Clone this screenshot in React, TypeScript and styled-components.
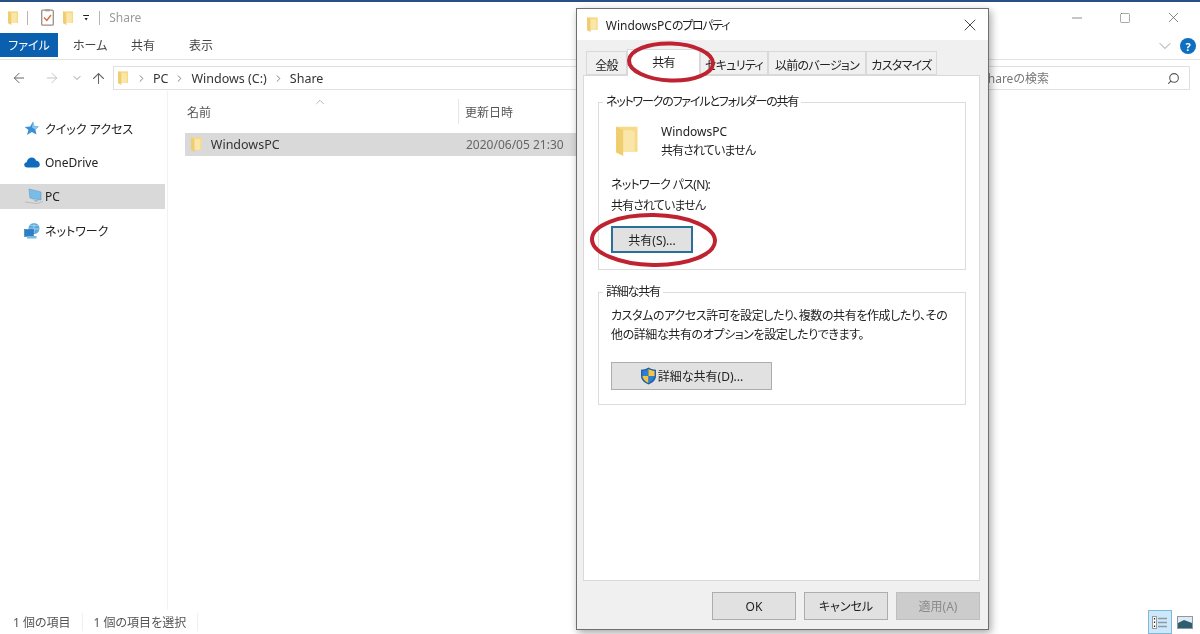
import React from "react";
import styled, { createGlobalStyle } from "styled-components";
import { ArrowLeft, ArrowRight, ArrowUp, ChevronDown, ChevronRight, ChevronUp, Minus, Search, Square, X } from "lucide-react";

const GlobalStyle = createGlobalStyle`
  html, body {
    margin: 0;
    padding: 0;
    background: #fff;
  }
  * {
    box-sizing: border-box;
  }
  body {
    font-family: "Noto Sans", "Noto Sans CJK JP", sans-serif;
    font-feature-settings: "palt";
    font-size: 12px;
    color: #1e1e1e;
  }
`;

function FolderIcon({ size = 14 }: { size?: number }) {
  return (
    <svg width={size * 0.72} height={size} viewBox="0 0 15 21">
      <path d="M0 0.5 H15 V18 H0 Z" fill="#f6da88" />
      <path d="M0 0.5 L5 3 V21 L0 18.5 Z" fill="#f0cd6e" />
      <path d="M5 3 L11 3 L13 4 V18 H5 Z" fill="#fae6a8" />
    </svg>
  );
}

function Shield() {
  return (
    <svg width="17" height="18" viewBox="0 0 17 18">
      <path d="M8.5 0.5 C6 2 3.5 2.6 1 2.8 V9 C1 13 4.5 16 8.5 17.5 C12.5 16 16 13 16 9 V2.8 C13.5 2.6 11 2 8.5 0.5 Z" fill="#1f5fa8" />
      <path d="M8.5 2 V9 H2.4 V4 C4.6 3.8 6.6 3.2 8.5 2 Z" fill="#2f7fd0" />
      <path d="M8.5 2 C10.4 3.2 12.4 3.8 14.6 4 V9 H8.5 Z" fill="#f5c443" />
      <path d="M2.4 9 H8.5 V16 C5.4 14.8 2.8 12.4 2.4 9 Z" fill="#f5c443" />
      <path d="M8.5 9 H14.6 C14.2 12.4 11.6 14.8 8.5 16 Z" fill="#2f7fd0" />
    </svg>
  );
}

function ChecklistIcon() {
  return (
    <svg width="13" height="17" viewBox="0 0 13 17">
      <rect x="0.7" y="1.2" width="11.6" height="15" rx="1" fill="#fff" stroke="#9a9088" strokeWidth="1.3" />
      <rect x="4" y="0.3" width="5" height="2" fill="#a89a8c" />
      <path d="M3 8.5 L5.8 11.5 L10 6" fill="none" stroke="#d8673a" strokeWidth="1.3" />
    </svg>
  );
}

function StarIcon() {
  return (
    <svg width="15" height="15" viewBox="0 0 15 15">
      <path d="M9 0.5 L10.4 5 L14.8 5.4 L11.4 8.4 L12.4 13.5 L7.8 10.9 L3 14 L4.4 9 L0.8 6 L6.2 5.4 Z" fill="#3a8fd8" />
      <path d="M9 0.5 L10.4 5 L14.8 5.4 L11.4 8.4 L8 6.5 Z" fill="#8cc6f0" />
    </svg>
  );
}

function CloudIcon() {
  return (
    <svg width="16" height="11" viewBox="0 0 16 11">
      <path d="M3.4 10.5 C1.4 10.5 0.2 9.2 0.2 7.8 C0.2 6.4 1.2 5.4 2.6 5.2 C3.2 2.4 5.4 0.6 7.8 0.6 C9.8 0.6 11.4 1.8 12 3.4 C14.2 3.6 15.8 5.2 15.8 7.4 C15.8 9.2 14.6 10.5 12.8 10.5 Z" fill="#0f6cbd" />
    </svg>
  );
}

function PcIcon() {
  return (
    <svg width="20" height="17" viewBox="0 0 20 17">
      <path d="M5 1 L17 4 V12 L6 10 Z" fill="#79bde6" stroke="#5c9cc8" strokeWidth="0.6" />
      <path d="M1 14 L13 15.5 L19 13.5" fill="none" stroke="#bcbcbc" strokeWidth="1" />
      <path d="M8 11 L15 12.5 L12 14 Z" fill="#9fb8c8" />
    </svg>
  );
}

function NetworkIcon() {
  return (
    <svg width="16" height="16" viewBox="0 0 16 16">
      <circle cx="10" cy="5.5" r="5.5" fill="#5fa8de" />
      <path d="M6 2 C8 3 12 3 14 2 M5 6 H15 M10 0 V10" stroke="#b8dcf4" strokeWidth="0.7" fill="none" />
      <rect x="0.5" y="6.5" width="9" height="7" fill="#2b7fc4" stroke="#1e6aa8" strokeWidth="0.5" />
      <rect x="3" y="13" width="9.5" height="2.5" fill="#7db8e2" />
    </svg>
  );
}

function DetailsViewIcon() {
  return (
    <svg width="16" height="13" viewBox="0 0 16 13">
      <rect x="0.5" y="0.5" width="4" height="12" fill="#fff" stroke="#9a9a9a" />
      <path d="M2.5 2 V3.5 M2.5 5.5 V7 M2.5 9.5 V11" stroke="#222" strokeWidth="1.2" />
      <path d="M6 2.5 H15 M6 6.5 H15 M6 10.5 H15" stroke="#8a9aa8" strokeWidth="1.3" />
    </svg>
  );
}

function PreviewViewIcon() {
  return (
    <svg width="16" height="13" viewBox="0 0 16 13">
      <rect x="0.5" y="0.5" width="15" height="12" fill="#dfeaf2" stroke="#8c9aa6" />
      <path d="M1 7 L7 4 L15 7 V12 H1 Z" fill="#2f5f6f" />
    </svg>
  );
}

export default function App() {
  return (
    <Screen>
      <GlobalStyle />
      <TopEdge />
      <TitleBar>
        <FolderIcon size={14} />
        <TitleSep />
        <ChecklistIcon />
        <FolderIcon size={14} />
        <Dropdown>
          <i />
        </Dropdown>
        <TitleSep />
        <TitleText>Share</TitleText>
        <WindowButtons>
          <Minus size={16} strokeWidth={1} />
          <Square size={12} strokeWidth={1} />
          <X size={17} strokeWidth={1} />
        </WindowButtons>
      </TitleBar>
      <Ribbon>
        <FileTab>ファイル</FileTab>
        <RibbonTab>ホーム</RibbonTab>
        <RibbonTab>共有</RibbonTab>
        <RibbonTab>表示</RibbonTab>
        <RibbonRight>
          <ChevronDown size={20} strokeWidth={1} color="#888" />
          <HelpBadge>?</HelpBadge>
        </RibbonRight>
      </Ribbon>
      <AddressRow>
        <NavArrows>
          <ArrowLeft size={16} strokeWidth={1.5} color="#666" />
          <ArrowRight size={16} strokeWidth={1.3} color="#bbb" />
          <ChevronDown size={12} strokeWidth={1.5} color="#777" />
          <ArrowUp size={17} strokeWidth={1.5} color="#666" />
        </NavArrows>
        <AddressBar>
          <FolderIcon size={14} />
          <ChevronRight size={11} color="#777" />
          <span>PC</span>
          <ChevronRight size={11} color="#777" />
          <span>Windows (C:)</span>
          <ChevronRight size={11} color="#777" />
          <span>Share</span>
        </AddressBar>
        <SearchBox>
          <span>Shareの検索</span>
          <Search size={13} strokeWidth={2} color="#555" style={{ transform: "scaleX(-1)" }} />
        </SearchBox>
      </AddressRow>
      <Body>
        <NavPane>
          <NavItem>
            <NavIcon><StarIcon /></NavIcon>クイック アクセス
          </NavItem>
          <NavItem>
            <NavIcon><CloudIcon /></NavIcon>OneDrive
          </NavItem>
          <NavItem $selected>
            <NavIcon><PcIcon /></NavIcon>PC
          </NavItem>
          <NavItem>
            <NavIcon><NetworkIcon /></NavIcon>ネットワーク
          </NavItem>
        </NavPane>
        <Content>
          <ColumnHeader>
            <NameColumn>
              名前
              <SortMark><ChevronUp size={14} strokeWidth={1} color="#888" /></SortMark>
            </NameColumn>
            <DateColumn>更新日時</DateColumn>
          </ColumnHeader>
          <FileRow>
            <FileName>
              <FolderIcon size={15} />
              WindowsPC
            </FileName>
            <FileDate>2020/06/05 21:30</FileDate>
          </FileRow>
        </Content>
      </Body>
      <StatusBar>
        <StatusText>1 個の項目</StatusText>
        <StatusText>1 個の項目を選択</StatusText>
        <ViewButtons>
          <ViewButton $active><DetailsViewIcon /></ViewButton>
          <ViewButton><PreviewViewIcon /></ViewButton>
        </ViewButtons>
      </StatusBar>

      <Dialog>
        <DialogTitle>
          <FolderIcon size={15} />
          <span>
            WindowsPC<Tight $spacing={-1.3}>のプロパティ</Tight>
          </span>
          <DialogClose><X size={20} strokeWidth={1} color="#222" /></DialogClose>
        </DialogTitle>
        <DialogBody>
          <TabStrip>
            <Tab $width={41}>全般</Tab>
            <Tab $width={73} $active>共有</Tab>
            <Tab $width={68}>セキュリティ</Tab>
            <Tab $width={98}>以前のバージョン</Tab>
            <Tab $width={71}>カスタマイズ</Tab>
          </TabStrip>
          <Panel>
            <Group $height={176}>
              <legend>ネットワークのファイルとフォルダーの共有</legend>
              <ShareInfo>
                <BigFolder><FolderIcon size={30} /></BigFolder>
                <div>
                  <div>WindowsPC</div>
                  <Tight $spacing={-0.9}>共有されていません</Tight>
                </div>
              </ShareInfo>
              <PathLabel>ネットワーク パス(N):</PathLabel>
              <PathValue>共有されていません</PathValue>
              <ShareButton>共有(S)...</ShareButton>
            </Group>
            <Group $height={121}>
              <legend>詳細な共有</legend>
              <Description>
                カスタムのアクセス許可を設定したり、複数の共有を作成したり、その
                <br />
                他の詳細な共有のオプションを設定したりできます。
              </Description>
              <AdvancedButton>
                <Shield />
                詳細な共有(D)...
              </AdvancedButton>
            </Group>
          </Panel>
          <DialogFooter>
            <FooterButton>OK</FooterButton>
            <FooterButton>キャンセル</FooterButton>
            <FooterButton disabled>適用(A)</FooterButton>
          </DialogFooter>
        </DialogBody>
      </Dialog>

      <Marks width="1200" height="634" viewBox="0 0 1200 634">
        <ellipse cx="671" cy="62" rx="42" ry="18.5" transform="rotate(2 671 62)" />
        <ellipse cx="653.5" cy="240" rx="61.5" ry="25" transform="rotate(1 653 240)" />
      </Marks>
    </Screen>
  );
}

const Screen = styled.div`
  position: relative;
  width: 1200px;
  height: 634px;
  overflow: hidden;
  display: flex;
  flex-direction: column;
  background: #fff;
  filter: blur(0.3px);
`;

const TopEdge = styled.div`
  height: 2px;
  background: #2a4f84;
`;

const TitleBar = styled.div`
  height: 31px;
  display: flex;
  align-items: center;
  padding-left: 8px;
  gap: 9px;
`;

const TitleSep = styled.div`
  width: 1px;
  height: 14px;
  background: #b5b5b5;
  margin-right: 4px;
`;

const Dropdown = styled.div`
  width: 8px;
  display: flex;
  justify-content: center;

  i {
    display: block;
    width: 6px;
    height: 6px;
    border-top: 1px solid #222;
    background: linear-gradient(#222, #222) center 2px / 6px 3px no-repeat;
    clip-path: polygon(0 0, 100% 0, 100% 20%, 50% 100%, 0 20%);
  }
`;

const TitleText = styled.span`
  color: #9b9b9b;
  font-size: 12px;
  margin-left: -4px;
`;

const WindowButtons = styled.div`
  margin-left: auto;
  display: flex;
  align-items: center;
  gap: 34px;
  padding-right: 18px;
  color: #555;
`;

const Ribbon = styled.div`
  height: 27px;
  display: flex;
  align-items: flex-start;
  border-bottom: 1px solid #e3e3e3;
`;

const FileTab = styled.div`
  width: 58px;
  height: 24px;
  background: #0a5fae;
  color: #fff;
  display: flex;
  align-items: center;
  justify-content: center;
`;

const RibbonTab = styled.div`
  height: 24px;
  margin-left: 15px;
  width: 43px;
  display: flex;
  align-items: center;
  color: #444;
`;

const RibbonRight = styled.div`
  margin-left: auto;
  display: flex;
  align-items: center;
  gap: 5px;
  padding: 3px 4px 0 0;
`;

const HelpBadge = styled.div`
  width: 16px;
  height: 16px;
  border-radius: 50%;
  background: #0e6fc0;
  color: #fff;
  font-weight: 700;
  font-size: 11px;
  display: flex;
  align-items: center;
  justify-content: center;
`;

const AddressRow = styled.div`
  height: 31px;
  padding: 6px 10px 0 11px;
  display: flex;
  align-items: flex-start;
`;

const NavArrows = styled.div`
  width: 102px;
  height: 24px;
  display: flex;
  align-items: center;
  gap: 17px;

  svg:nth-child(3) {
    margin-left: -6px;
  }

  svg:last-child {
    margin-left: -10px;
  }
`;

const AddressBar = styled.div`
  width: 849px;
  height: 24px;
  border: 1px solid #e0e0e0;
  display: flex;
  align-items: center;
  gap: 6px;
  padding-left: 4px;
  font-size: 12.5px;
  color: #333;

  svg:first-child {
    margin-right: 2px;
  }
`;

const SearchBox = styled.div`
  margin-left: auto;
  width: 229px;
  height: 24px;
  border: 1px solid #e0e0e0;
  display: flex;
  align-items: center;
  justify-content: space-between;
  padding: 0 9px 0 19px;
  color: #777;
`;

const Body = styled.div`
  flex: 1;
  display: flex;
  min-height: 0;
`;

const NavPane = styled.div`
  width: 168px;
  padding-top: 25px;
  padding-right: 2px;
  border-right: 1px solid #f2f2f2;
  display: flex;
  flex-direction: column;
  gap: 9px;
`;

const NavItem = styled.div<{ $selected?: boolean }>`
  height: 25px;
  display: flex;
  align-items: center;
  padding-left: 24px;
  background: ${(p) => (p.$selected ? "#d9d9d9" : "transparent")};
  color: #222;
`;

const NavIcon = styled.span`
  width: 21px;
  display: flex;
  align-items: center;
`;

const Content = styled.div`
  flex: 1;
  padding: 8px 0 0 17px;
`;

const ColumnHeader = styled.div`
  height: 25px;
  display: flex;
  align-items: center;
  color: #555;
`;

const NameColumn = styled.div`
  position: relative;
  width: 274px;
  height: 100%;
  padding-left: 2px;
  display: flex;
  align-items: center;
  border-right: 1px solid #e6e6e6;
`;

const SortMark = styled.span`
  position: absolute;
  left: 128px;
  top: -4px;
  display: flex;
`;

const DateColumn = styled.div`
  padding-left: 6px;
`;

const FileRow = styled.div`
  margin-top: 9px;
  width: 500px;
  height: 23px;
  background: #d9d9d9;
  display: flex;
  align-items: center;
`;

const FileName = styled.div`
  width: 281px;
  padding-left: 6px;
  display: flex;
  align-items: center;
  gap: 9px;
  color: #333;
  font-size: 12.5px;
`;

const FileDate = styled.div`
  color: #666;
`;

const StatusBar = styled.div`
  height: 24px;
  display: flex;
  align-items: center;
  padding-left: 13px;
  color: #555;
`;

const StatusText = styled.span`
  padding-right: 11px;
  margin-right: 11px;
  border-right: 1px solid #f0f0f0;
`;

const ViewButtons = styled.div`
  margin-left: auto;
  display: flex;
  gap: 4px;
  padding-right: 2px;
`;

const ViewButton = styled.div<{ $active?: boolean }>`
  width: ${(p) => (p.$active ? 24 : 22)}px;
  height: 24px;
  display: flex;
  align-items: center;
  justify-content: ${(p) => (p.$active ? "center" : "flex-start")};
  background: ${(p) => (p.$active ? "#cde8f8" : "transparent")};
  border: 1px solid ${(p) => (p.$active ? "#7fb8d8" : "transparent")};
`;

/* floating window over the explorer */
const Dialog = styled.div`
  position: absolute;
  left: 576px;
  top: 8px;
  width: 413px;
  height: 622px;
  display: flex;
  flex-direction: column;
  background: #f0f0f0;
  border: 1px solid #6f6f6f;
  box-shadow: 2px 3px 8px rgba(0, 0, 0, 0.35);
`;

const DialogTitle = styled.div`
  height: 31px;
  background: #fff;
  display: flex;
  align-items: center;
  gap: 8px;
  padding: 0 8px 0 10px;
  font-size: 12px;
`;

const DialogClose = styled.span`
  margin-left: auto;
  display: flex;
`;

const Tight = styled.span<{ $spacing: number }>`
  display: inline-block;
  letter-spacing: ${(p) => p.$spacing}px;
`;

const DialogBody = styled.div`
  flex: 1;
  display: flex;
  flex-direction: column;
  padding: 11px 8px 9px 6px;
  min-height: 0;
`;

const TabStrip = styled.div`
  height: 24px;
  display: flex;
  padding-left: 3px;
  align-items: flex-end;
  position: relative;
  z-index: 1;
`;

const Tab = styled.div<{ $width: number; $active?: boolean }>`
  width: ${(p) => p.$width}px;
  height: ${(p) => (p.$active ? 27 : 24)}px;
  margin-bottom: ${(p) => (p.$active ? -1 : 0)}px;
  display: flex;
  align-items: center;
  justify-content: center;
  padding: ${(p) => (p.$active ? "0 0 3px" : "4px 0 0")};
  background: ${(p) => (p.$active ? "#fff" : "#f0f0f0")};
  border: 1px solid #d9d9d9;
  border-bottom: ${(p) => (p.$active ? "none" : "1px solid #d9d9d9")};
  color: #222;
  letter-spacing: -0.7px;
`;

const Panel = styled.div`
  flex: 1;
  background: #fff;
  border: 1px solid #d9d9d9;
  padding: 18px 13px 0 14px;
  display: flex;
  flex-direction: column;
  gap: 14px;
`;

const Group = styled.fieldset<{ $height: number }>`
  margin: 0;
  height: ${(p) => p.$height}px;
  border: 1px solid #dcdcdc;
  padding: 0 12px;

  legend {
    padding: 0 3px;
    margin-left: -8px;
    line-height: 16px;
    color: #222;
    letter-spacing: -1.2px;
  }
`;

const ShareInfo = styled.div`
  display: flex;
  align-items: center;
  margin-top: 12px;
  line-height: 19px;
  color: #222;
`;

const BigFolder = styled.div`
  width: 50px;
  padding-left: 5px;
  display: flex;
`;

const PathLabel = styled.div`
  margin-top: 15px;
  line-height: 19px;
  letter-spacing: -0.7px;
`;

const PathValue = styled.div`
  margin-top: 2px;
  line-height: 19px;
  letter-spacing: -0.9px;
`;

const ActionButton = styled.button`
  font: inherit;
  font-feature-settings: "palt";
  color: #222;
  background: #e1e1e1;
  border: 1px solid #adadad;
  padding: 0;
  display: flex;
  align-items: center;
  justify-content: center;
`;

const ShareButton = styled(ActionButton)`
  margin-top: 11px;
  width: 82px;
  height: 27px;
  border: 2px solid #2a6f96;
`;

const Description = styled.div`
  margin-top: 7px;
  line-height: 18.5px;
  white-space: nowrap;
  color: #222;
  letter-spacing: -0.4px;
`;

const AdvancedButton = styled(ActionButton)`
  margin-top: 18px;
  width: 161px;
  height: 28px;
  gap: 1px;
`;

const DialogFooter = styled.div`
  display: flex;
  justify-content: flex-end;
  gap: 8px;
  padding-top: 11px;
`;

const FooterButton = styled(ActionButton)`
  width: 84px;
  height: 28px;

  &:disabled {
    background: #cccccc;
    border-color: #bfbfbf;
    color: #8a8a8a;
  }
`;

/* hand drawn red circles on top of the screenshot */
const Marks = styled.svg`
  position: absolute;
  inset: 0;
  z-index: 2;
  pointer-events: none;

  ellipse {
    fill: none;
    stroke: #bf2231;
    stroke-width: 4;
  }
`;
